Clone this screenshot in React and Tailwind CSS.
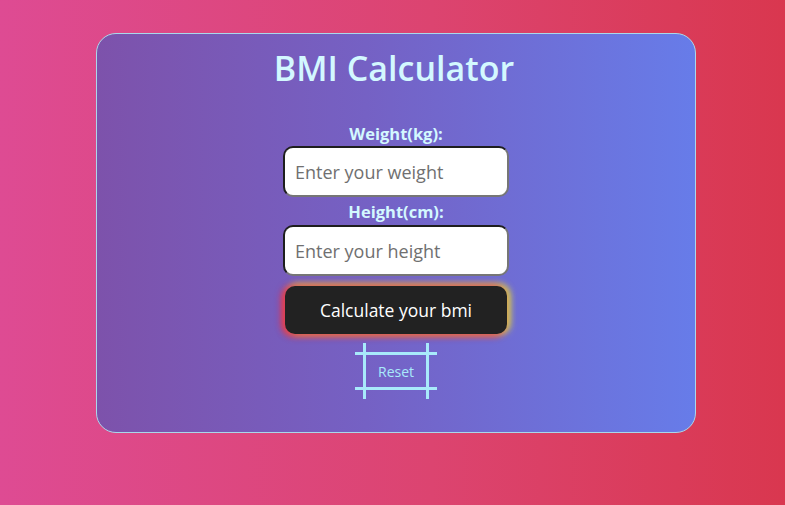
import React from "react";

export default function App() {
  return (
    <div className="w-[785px] h-[505px] overflow-hidden bg-[linear-gradient(90deg,#de4b93_0%,#dc4470_55%,#d9374f_100%)] pt-[33px] font-['Open_Sans',sans-serif]">
      <div className="ml-[96px] w-[600px] h-[400px] rounded-[20px] border border-[#a9d8ea] bg-[linear-gradient(90deg,#7d52ab_0%,#7561c4_45%,#677ce9_100%)] flex flex-col items-center pt-[12px]">
        <h1 className="text-[34px] leading-[44px] font-semibold text-[#d3f8ff] -ml-[4px]">BMI Calculator</h1>
        <label className="mt-[33px] text-[16.5px] leading-[22px] font-bold text-[#d3f8ff]">Weight(kg):</label>
        <input
          type="text"
          placeholder="Enter your weight"
          className="mt-[1px] w-[226px] h-[51px] rounded-[10px] bg-white border-2 border-t-[#1e1e1e] border-l-[#1e1e1e] border-r-[#767676] border-b-[#767676] pl-[10px] text-[18px] placeholder:text-[#707070] outline-none"
        />
        <label className="mt-[4px] text-[16.5px] leading-[22px] font-bold text-[#d3f8ff]">Height(cm):</label>
        <input
          type="text"
          placeholder="Enter your height"
          className="mt-[2px] w-[226px] h-[51px] rounded-[10px] bg-white border-2 border-t-[#1e1e1e] border-l-[#1e1e1e] border-r-[#767676] border-b-[#767676] pl-[10px] text-[18px] placeholder:text-[#707070] outline-none"
        />
        <button className="mt-[10px] w-[222px] h-[48px] rounded-[10px] bg-[#222222] text-white text-[17.5px] shadow-[-3px_0_7px_#e8334f,3px_0_7px_#d8d84a,-2px_3px_6px_rgba(230,60,70,0.7),2px_-3px_6px_rgba(220,200,70,0.6)]">
          Calculate your bmi
        </button>
        <div className="relative mt-[18px] w-[66px] h-[38px] flex items-center justify-center">
          <span className="absolute left-[-8px] right-[-8px] top-0 h-[3px] bg-[#a8eafb]" />
          <span className="absolute left-[-8px] right-[-8px] bottom-0 h-[3px] bg-[#a8eafb]" />
          <span className="absolute top-[-9px] bottom-[-9px] left-0 w-[3px] bg-[#a8eafb]" />
          <span className="absolute top-[-9px] bottom-[-9px] right-0 w-[3px] bg-[#a8eafb]" />
          <span className="text-[14px] text-[#a8eafb]">Reset</span>
        </div>
      </div>
    </div>
  );
}
